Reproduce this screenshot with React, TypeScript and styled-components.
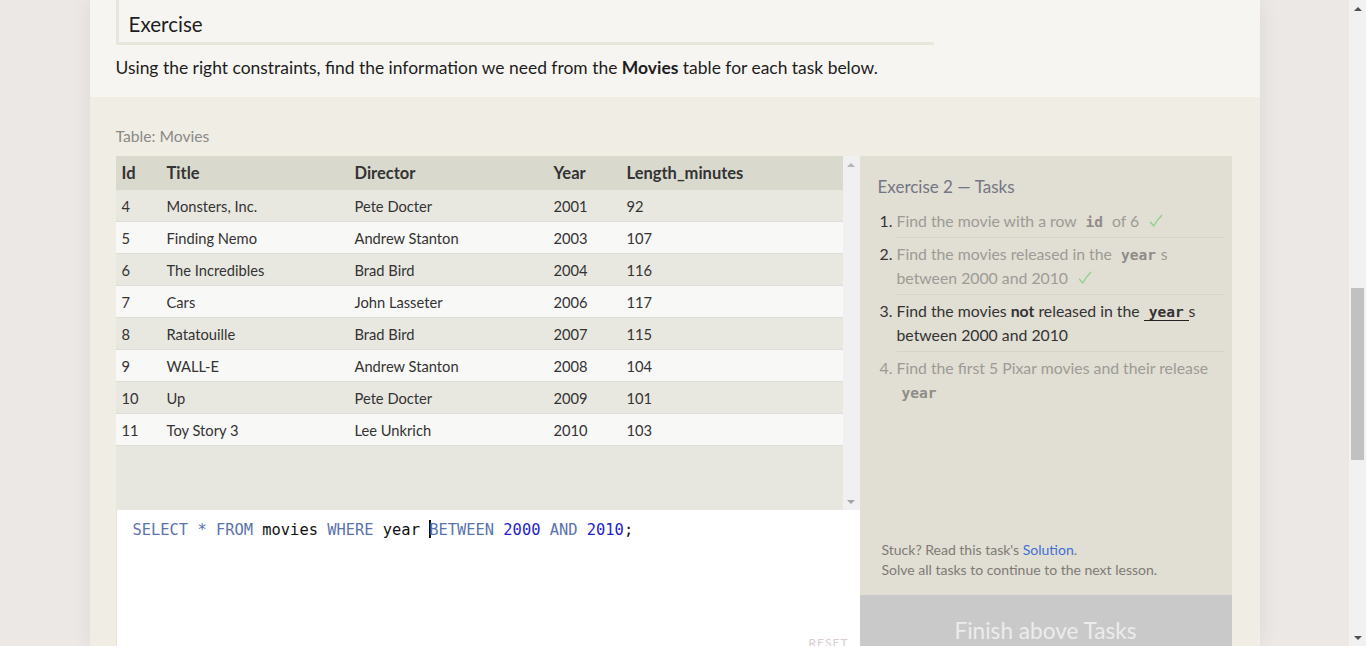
import React from "react";
import styled, { createGlobalStyle } from "styled-components";

const GlobalStyle = createGlobalStyle`
  html, body { margin: 0; padding: 0; overflow: hidden; }
  body {
    background: #ece8e5;
    font-family: Lato, "Open Sans", sans-serif;
    color: #222;
  }
`;

const Page = styled.div`
  display: flex;
  height: 646px;
  overflow: hidden;
`;

const Viewport = styled.div`
  flex: 1;
  display: flex;
  justify-content: center;
  overflow: hidden;
`;

const PageScrollbar = styled.div`
  width: 17px;
  background: #f1f1f1;
  display: flex;
  flex-direction: column;
  align-items: center;
`;

const ScrollArrow = styled.div<{ $dir: "up" | "down"; $color: string }>`
  height: 17px;
  width: 17px;
  flex-shrink: 0;
  display: flex;
  align-items: center;
  justify-content: center;
  &::after {
    content: "";
    width: 0;
    height: 0;
    border-left: 4px solid transparent;
    border-right: 4px solid transparent;
    ${(p) =>
      p.$dir === "up"
        ? `border-bottom: 4px solid ${p.$color};`
        : `border-top: 4px solid ${p.$color};`}
  }
`;

const Thumb = styled.div<{ $top: number; $height: number }>`
  margin-top: ${(p) => p.$top}px;
  height: ${(p) => p.$height}px;
  width: 13px;
  flex-shrink: 0;
  background: #c1c1c1;
`;

const ScrollGap = styled.div`
  flex: 1;
`;

const Main = styled.div`
  width: 1170px;
  flex-shrink: 0;
  display: flex;
  flex-direction: column;
  box-shadow: 0 0 18px rgba(90, 70, 60, 0.09);
`;

const Intro = styled.section`
  background: #f6f5f1;
  padding: 0 28px 0 26px;
  height: 97px;
  flex-shrink: 0;
  box-sizing: border-box;
`;

const Heading = styled.h2`
  margin: 0;
  width: 818px;
  height: 45px;
  box-sizing: border-box;
  padding: 10px 0 0 10px;
  border-left: 3px solid #e9e7dc;
  border-bottom: 3px solid #e9e7dc;
  font-size: 20.6px;
  font-weight: 400;
  line-height: 28px;
  color: #1d1d1d;
`;

const Lead = styled.p`
  margin: 11px 0 0;
  font-size: 17.45px;
  line-height: 24px;
  color: #1d1d1d;
  b { font-weight: 700; }
`;

const Lower = styled.section`
  background: #f0ede5;
  padding: 29px 28px 0 26px;
  flex-shrink: 0;
`;

const TableLabel = styled.div`
  font-size: 15.7px;
  line-height: 20px;
  color: #8a8987;
  margin-bottom: 10px;
`;

const Workspace = styled.div`
  display: grid;
  grid-template-columns: 744px 372px;
`;

const LeftCol = styled.div`
  display: flex;
  flex-direction: column;
`;

const TableBox = styled.div`
  height: 354px;
  display: flex;
  background: #e8e7df;
`;

const TableScroll = styled.div`
  flex: 1;
  overflow: hidden;
`;

const InnerScrollbar = styled.div`
  width: 17px;
  background: #f0f0f0;
  display: flex;
  flex-direction: column;
  justify-content: space-between;
`;

const Table = styled.table`
  width: 100%;
  border-collapse: collapse;
  table-layout: fixed;
  font-size: 14.7px;
  color: #333;
`;

const HeadCell = styled.th<{ $w?: number }>`
  text-align: left;
  font-weight: 700;
  font-size: 16.5px;
  height: 34px;
  padding: 0 0 0 6px;
  background: #dad9ce;
  width: ${(p) => (p.$w ? `${p.$w}px` : "auto")};
  box-sizing: border-box;
`;

const Row = styled.tr<{ $alt: boolean }>`
  background: ${(p) => (p.$alt ? "#f8f8f7" : "#e9e8e0")};
`;

const Cell = styled.td`
  height: 31px;
  padding: 0 0 0 6px;
  border-bottom: 1px solid #dedcd6;
`;

const Editor = styled.div`
  height: 155px;
  box-sizing: border-box;
  background: #fff;
  border-left: 1px solid #e6e4dc;
  padding: 10px 12px 0 16px;
  display: flex;
  flex-direction: column;
`;

const CodeLine = styled.div`
  font-family: "DejaVu Sans Mono", "Liberation Mono", monospace;
  font-size: 15.4px;
  line-height: 20px;
  color: #111;
  white-space: pre;
`;

const Tok = styled.span<{ $kind: "kw" | "num" | "id" }>`
  color: ${(p) =>
    p.$kind === "kw" ? "#5b73ad" : p.$kind === "num" ? "#2222cc" : "#111"};
`;

const Caret = styled.span`
  display: inline-block;
  width: 2px;
  height: 18px;
  margin-right: -2px;
  background: #111;
  vertical-align: -3px;
`;

const ResetButton = styled.div`
  margin-top: auto;
  align-self: flex-end;
  margin-bottom: 14px;
  margin-right: -1px;
  font-size: 12px;
  letter-spacing: 1px;
  color: #d9cdcd;
  line-height: 16px;
`;

const Panel = styled.aside`
  background: #e1ded3;
  display: flex;
  flex-direction: column;
`;

const PanelTitle = styled.div`
  font-size: 17px;
  line-height: 22px;
  color: #737684;
  padding: 20px 0 0 18px;
  margin-bottom: 7px;
`;

const TaskList = styled.ol`
  margin: 0;
  padding: 0 8px 0 18px;
  list-style: none;
`;

const Task = styled.li`
  display: flex;
`;

const TaskNum = styled.span<{ $state: "done" | "active" | "todo" }>`
  width: 19px;
  flex-shrink: 0;
  padding: 4px 4px 0 0;
  box-sizing: border-box;
  text-align: right;
  font-size: 15.8px;
  line-height: 24px;
  color: ${(p) => (p.$state === "todo" ? "#9d9b96" : "#333")};
`;

const TaskText = styled.div<{ $state: "done" | "active" | "todo"; $last?: boolean }>`
  flex: 1;
  padding: 4px 0;
  font-size: 15.8px;
  line-height: 24px;
  border-bottom: ${(p) => (p.$last ? "none" : "1px solid #d6d3c8")};
  color: ${(p) => (p.$state === "active" ? "#333" : "#9d9b96")};
  b { font-weight: 700; }
`;

const InlineCode = styled.code<{ $active?: boolean }>`
  font-family: "DejaVu Sans Mono", "Liberation Mono", monospace;
  font-weight: 700;
  font-size: 14.5px;
  line-height: 14px;
  padding: 0 5px;
  color: ${(p) => (p.$active ? "#333" : "#8e8c88")};
  border-bottom: ${(p) => (p.$active ? "1px solid #222" : "none")};
`;

const CheckMark = styled.svg`
  width: 14px;
  height: 14px;
  margin-left: 10px;
  vertical-align: -1px;
`;

const PanelFooter = styled.div`
  margin-top: auto;
  padding: 0 0 15px 22px;
  font-size: 14px;
  line-height: 20px;
  color: #7e7b76;
  a { color: #3f6ed8; text-decoration: none; }
`;

const FinishButton = styled.div`
  height: 70px;
  background: #c9c9c9;
  color: #ececec;
  font-size: 22.6px;
  display: flex;
  align-items: center;
  justify-content: center;
  box-sizing: border-box;
`;

const Check = () => (
  <CheckMark viewBox="0 0 14 14" aria-hidden="true">
    <path d="M1.5 8.2 L4.8 12 Q8 6 12.8 1.2" fill="none" stroke="#8fd08f" strokeWidth="1.3" strokeLinecap="round" strokeLinejoin="round" />
  </CheckMark>
);

const movies = [
  [4, "Monsters, Inc.", "Pete Docter", 2001, 92],
  [5, "Finding Nemo", "Andrew Stanton", 2003, 107],
  [6, "The Incredibles", "Brad Bird", 2004, 116],
  [7, "Cars", "John Lasseter", 2006, 117],
  [8, "Ratatouille", "Brad Bird", 2007, 115],
  [9, "WALL-E", "Andrew Stanton", 2008, 104],
  [10, "Up", "Pete Docter", 2009, 101],
  [11, "Toy Story 3", "Lee Unkrich", 2010, 103],
];

export default function App() {
  return (
    <>
      <GlobalStyle />
      <Page>
        <Viewport>
          <Main>
            <Intro>
              <Heading>Exercise</Heading>
              <Lead>
                Using the right constraints, find the information we need from the <b>Movies</b> table for each task below.
              </Lead>
            </Intro>
            <Lower>
              <TableLabel>Table: Movies</TableLabel>
              <Workspace>
                <LeftCol>
                  <TableBox>
                    <TableScroll>
                      <Table>
                        <thead>
                          <tr>
                            <HeadCell $w={45}>Id</HeadCell>
                            <HeadCell $w={188}>Title</HeadCell>
                            <HeadCell $w={199}>Director</HeadCell>
                            <HeadCell $w={73}>Year</HeadCell>
                            <HeadCell>Length_minutes</HeadCell>
                          </tr>
                        </thead>
                        <tbody>
                          {movies.map((m, i) => (
                            <Row key={String(m[0])} $alt={i % 2 === 1}>
                              {m.map((v, j) => (
                                <Cell key={j}>{v}</Cell>
                              ))}
                            </Row>
                          ))}
                        </tbody>
                      </Table>
                    </TableScroll>
                    <InnerScrollbar>
                      <ScrollArrow $dir="up" $color="#b4b4b4" />
                      <ScrollArrow $dir="down" $color="#a3a3a3" />
                    </InnerScrollbar>
                  </TableBox>
                  <Editor>
                    <CodeLine>
                      <Tok $kind="kw">SELECT</Tok> <Tok $kind="kw">*</Tok> <Tok $kind="kw">FROM</Tok>{" "}
                      <Tok $kind="id">movies</Tok> <Tok $kind="kw">WHERE</Tok> <Tok $kind="id">year</Tok>{" "}
                      <Caret />
                      <Tok $kind="kw">BETWEEN</Tok> <Tok $kind="num">2000</Tok> <Tok $kind="kw">AND</Tok>{" "}
                      <Tok $kind="num">2010</Tok>;
                    </CodeLine>
                    <ResetButton>RESET</ResetButton>
                  </Editor>
                </LeftCol>
                <Panel>
                  <PanelTitle>Exercise 2 — Tasks</PanelTitle>
                  <TaskList>
                    <Task>
                      <TaskNum $state="done">1.</TaskNum>
                      <TaskText $state="done">
                        Find the movie with a row <InlineCode>id</InlineCode> of 6<Check />
                      </TaskText>
                    </Task>
                    <Task>
                      <TaskNum $state="done">2.</TaskNum>
                      <TaskText $state="done">
                        Find the movies released in the <InlineCode>year</InlineCode>s between 2000 and 2010
                        <Check />
                      </TaskText>
                    </Task>
                    <Task>
                      <TaskNum $state="active">3.</TaskNum>
                      <TaskText $state="active">
                        Find the movies <b>not</b> released in the <InlineCode $active>year</InlineCode>s between 2000 and 2010
                      </TaskText>
                    </Task>
                    <Task>
                      <TaskNum $state="todo">4.</TaskNum>
                      <TaskText $state="todo" $last>
                        Find the first 5 Pixar movies and their release <InlineCode>year</InlineCode>
                      </TaskText>
                    </Task>
                  </TaskList>
                  <PanelFooter>
                    Stuck? Read this task's <a href="#">Solution</a>.
                    <br />
                    Solve all tasks to continue to the next lesson.
                  </PanelFooter>
                  <FinishButton>Finish above Tasks</FinishButton>
                </Panel>
              </Workspace>
            </Lower>
          </Main>
        </Viewport>
        <PageScrollbar>
          <ScrollArrow $dir="up" $color="#505050" />
          <Thumb $top={271} $height={172} />
          <ScrollGap />
          <ScrollArrow $dir="down" $color="#505050" />
        </PageScrollbar>
      </Page>
    </>
  );
}
